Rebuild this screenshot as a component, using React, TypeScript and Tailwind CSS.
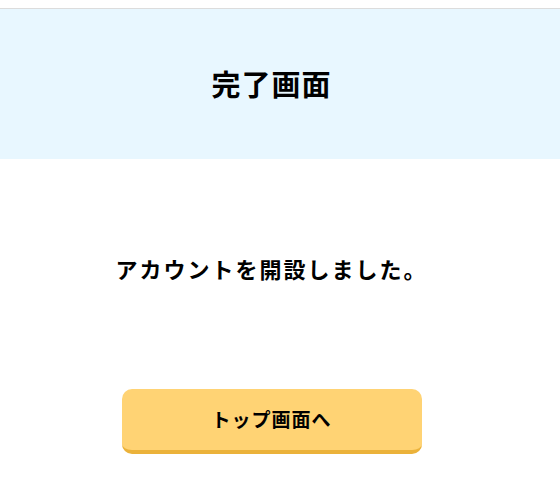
export default function App() {
  return (
    <div
      className="min-h-screen bg-white pt-2"
      style={{ fontFamily: '"Noto Sans CJK JP", "Noto Sans", sans-serif' }}
    >
      <header className="flex h-[151px] items-center justify-center border-t border-[#dcdcdc] bg-[#e8f7ff] pr-[17px]">
        <h1 className="text-[29px] font-bold tracking-[1px] text-black">完了画面</h1>
      </header>

      <main className="flex flex-col items-center pr-[17px] pt-[93px]">
        <p className="text-[22px] leading-[32px] font-bold tracking-[2px] text-black">
          アカウントを開設しました。
        </p>

        <button className="mt-[105px] h-[65px] w-[300px] rounded-[10px] border-b-4 border-[#ebb23a] bg-[#ffd374] text-[19px] font-bold tracking-[1px] text-black">
          トップ画面へ
        </button>
      </main>
    </div>
  );
}
